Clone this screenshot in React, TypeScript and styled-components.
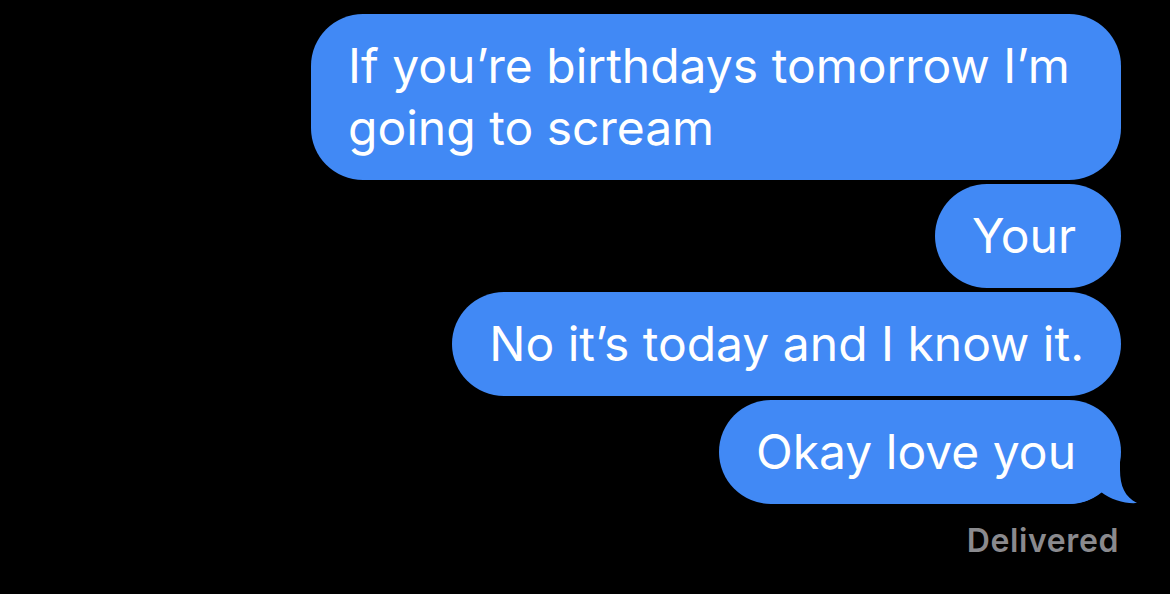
import React from "react";
import styled, { createGlobalStyle } from "styled-components";

const Global = createGlobalStyle`
  html, body { margin: 0; padding: 0; background: #000; }
  body { width: 1170px; height: 594px; overflow: hidden; }
`;

const Screen = styled.div`
  width: 1170px;
  height: 594px;
  background: #000;
  box-sizing: border-box;
  padding: 14px 49px 0 0;
  display: flex;
  flex-direction: column;
  align-items: flex-end;
  gap: 4px;
  font-family: Inter, "Noto Sans", sans-serif;
`;

const Bubble = styled.div`
  position: relative;
  box-sizing: border-box;
  max-width: 810px;
  background: #4189f5;
  color: #fff;
  font-size: 48px;
  line-height: 62px;
  padding: 21px 37px;
  border-radius: 52px;
  white-space: pre-wrap;
`;

const BubbleText = styled.span`
  position: relative;
  z-index: 1;
`;

const Tail = styled.svg`
  position: absolute;
  z-index: 0;
  right: -18px;
  bottom: 0;
  width: 80px;
  height: 54px;
  display: block;
`;

const Status = styled.div`
  margin-top: 15px;
  margin-right: 2px;
  color: #8a8a8e;
  font-size: 32px;
  font-weight: 600;
  line-height: 36px;
  letter-spacing: 0.6px;
`;

const messages: { text: string; tail?: boolean }[] = [
  { text: "If you\u2019re birthdays tomorrow I\u2019m going to scream" },
  { text: "Your\u2006" },
  { text: "No it\u2019s today and I know it." },
  { text: "Okay love you\u2006", tail: true },
];

export default function App() {
  return (
    <>
      <Global />
      <Screen>
        {messages.map((m, i) => (
          <Bubble key={i}>
            {m.tail && (
              <Tail viewBox="0 0 80 54" aria-hidden="true">
                <path
                  d="M61 0 L61 20 C61 36 66 47 78 53 C67 54 52 50 42 42 C34 49 24 54 8 54 L0 54 L0 0 Z"
                  fill="#4189f5"
                />
              </Tail>
            )}
            <BubbleText>{m.text}</BubbleText>
          </Bubble>
        ))}
        <Status>Delivered</Status>
      </Screen>
    </>
  );
}
